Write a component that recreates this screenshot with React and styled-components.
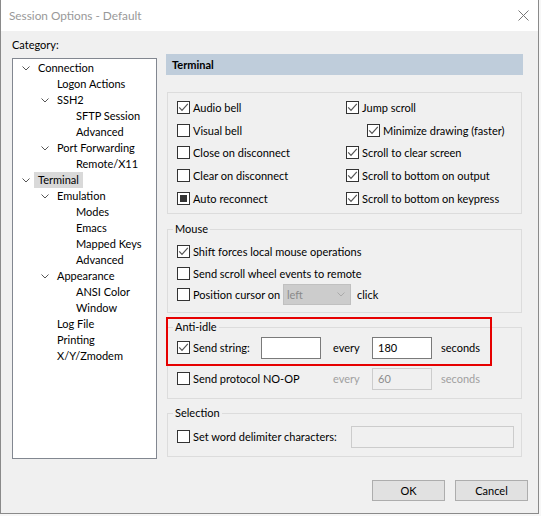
import React from 'react'
import styled, { createGlobalStyle } from 'styled-components'

const GlobalStyle = createGlobalStyle`
  html, body { margin: 0; padding: 0; background: #f7f7f7; }
  body {
    font-family: Lato, "Liberation Sans", sans-serif;
    font-size: 11px;
    color: #000;
  }
  * { box-sizing: border-box; }
`;

const Dialog = styled.div`
  width: 539px;
  height: 514px;
  background: #f0f0f0;
  border: 1px solid #8a8a8a;
  border-top: none;
  display: flex;
  flex-direction: column;
`;

const TitleBar = styled.div`
  height: 31px;
  flex-shrink: 0;
  background: #fff;
  display: flex;
  align-items: center;
  justify-content: space-between;
  padding: 0 9px 0 8px;
  color: #999;
  font-size: 11.8px;
`;

const Content = styled.div`
  display: grid;
  grid-template-columns: 145px 357px;
  column-gap: 9px;
  padding-left: 11px;
  height: 428px;
`;

const LeftCol = styled.div`
  padding-top: 7px;
  display: flex;
  flex-direction: column;
`;

const RightCol = styled.div`
  padding-top: 23px;
  display: flex;
  flex-direction: column;
`;

const CategoryLabel = styled.div`
  line-height: 14px;
  margin-bottom: 6px;
`;

const Tree = styled.div`
  height: 401px;
  background: #fff;
  border: 1px solid #828790;
  padding-top: 1px;
`;

const TreeRow = styled.div`
  height: 16px;
  display: flex;
  align-items: center;
  padding-left: ${p => 6 + p.$level * 19}px;
  white-space: nowrap;
`;

const Toggle = styled.span`
  width: 19px;
  height: 16px;
  flex-shrink: 0;
  display: flex;
  align-items: center;
  padding-left: 3px;
`;

const TreeLabel = styled.span`
  line-height: 16px;
  padding: 0 4px;
  margin-left: -4px;
  background: ${p => (p.$selected ? '#d9d9d9' : 'transparent')};
`;

const Header = styled.div`
  height: 21px;
  background: #bfcddb;
  display: flex;
  align-items: center;
  padding-left: 6px;
  font-weight: 700;
`;

const Group = styled.div`
  position: relative;
  margin: ${p => p.$top}px 1px 0 1px;
  border: 1px solid #dcdcdc;
  padding: ${p => p.$pad || '0 9px 0 9px'};
`;

const Legend = styled.div`
  width: fit-content;
  line-height: 14px;
  padding: 0 2px;
  margin: -8px 0 0 -4px;
  background: #f0f0f0;
`;

const CheckGrid = styled.div`
  display: grid;
  grid-template-columns: 169px 1fr;
  grid-template-rows: repeat(5, 22.75px);
  grid-auto-flow: column;
  align-items: center;
`;

const Rows = styled.div`
  margin-top: ${p => p.$top}px;
  display: grid;
  grid-auto-rows: ${p => p.$row}px;
  row-gap: ${p => p.$gap || 0}px;
  align-items: center;
`;

const Field = styled.div`
  display: grid;
  grid-template-columns: ${p => p.$cols};
  align-items: center;
  height: 100%;
`;

const CheckLabel = styled.label`
  display: flex;
  align-items: center;
  gap: 3px;
  margin-left: ${p => p.$indent || 0}px;
  white-space: nowrap;
`;

const Box = styled.span`
  width: 13px;
  height: 13px;
  flex-shrink: 0;
  border: 1px solid #333;
  background: #fff;
  display: flex;
  align-items: center;
  justify-content: center;
`;

const Mixed = styled.span`
  width: 7px;
  height: 7px;
  background: #333;
`;

const TextBox = styled.div`
  width: ${p => p.$w}px;
  height: 22px;
  border: 1px solid ${p => (p.$disabled ? '#cccccc' : '#7a7a7a')};
  background: ${p => (p.$disabled ? '#f0f0f0' : '#fff')};
  color: ${p => (p.$disabled ? '#8c8c8c' : '#000')};
  display: flex;
  align-items: center;
  padding-left: 5px;
`;

const Note = styled.span`
  padding-left: ${p => p.$pad || 0}px;
  color: ${p => (p.$disabled ? '#a0a0a0' : '#000')};
`;

const Select = styled.div`
  width: 68px;
  height: 21px;
  background: #cccccc;
  border: 1px solid #c0c0c0;
  color: #8a8a8a;
  display: flex;
  align-items: center;
  justify-content: space-between;
  padding: 0 5px 0 3px;
`;

const Highlight = styled.div`
  position: absolute;
  left: -2px;
  top: -11px;
  width: 326px;
  height: 49px;
  border: 2px solid #e60000;
  pointer-events: none;
`;

const Footer = styled.div`
  display: flex;
  justify-content: flex-end;
  gap: 10px;
  padding: 21px 10px 0 0;
`;

const Button = styled.button`
  width: 73px;
  height: 21px;
  background: #e1e1e1;
  border: 1px solid #adadad;
  font: inherit;
  color: #000;
  padding: 0;
`;

const Chevron = ({ color = '#555' }) => (
  <svg width="8" height="5" viewBox="0 0 8 5">
    <polyline points="0.5,0.5 4,4 7.5,0.5" fill="none" stroke={color} strokeWidth="1" />
  </svg>
);

const CloseIcon = () => (
  <svg width="11" height="11" viewBox="0 0 11 11">
    <path d="M0.5 0.5 L10.5 10.5 M10.5 0.5 L0.5 10.5" stroke="#777" strokeWidth="1" />
  </svg>
);

function Check({ checked, mixed, indent, children }) {
  return (
    <CheckLabel $indent={indent}>
      <Box>
        {checked && (
          <svg width="11" height="11" viewBox="0 0 11 11">
            <polyline points="1.2,5.4 4,8.4 9.8,1.8" fill="none" stroke="#555" strokeWidth="1.2" />
          </svg>
        )}
        {mixed && <Mixed />}
      </Box>
      {children}
    </CheckLabel>
  );
}

const tree = [
  { label: 'Connection', level: 0, open: true },
  { label: 'Logon Actions', level: 1 },
  { label: 'SSH2', level: 1, open: true },
  { label: 'SFTP Session', level: 2 },
  { label: 'Advanced', level: 2 },
  { label: 'Port Forwarding', level: 1, open: true },
  { label: 'Remote/X11', level: 2 },
  { label: 'Terminal', level: 0, open: true, selected: true },
  { label: 'Emulation', level: 1, open: true },
  { label: 'Modes', level: 2 },
  { label: 'Emacs', level: 2 },
  { label: 'Mapped Keys', level: 2 },
  { label: 'Advanced', level: 2 },
  { label: 'Appearance', level: 1, open: true },
  { label: 'ANSI Color', level: 2 },
  { label: 'Window', level: 2 },
  { label: 'Log File', level: 1 },
  { label: 'Printing', level: 1 },
  { label: 'X/Y/Zmodem', level: 1 },
];

export default function App() {
  return (
    <>
      <GlobalStyle />
      <Dialog>
        <TitleBar>
          <span>Session Options - Default</span>
          <CloseIcon />
        </TitleBar>
        <Content>
          <LeftCol>
            <CategoryLabel>Category:</CategoryLabel>
            <Tree>
              {tree.map((item, i) => (
                <TreeRow key={i} $level={item.level}>
                  <Toggle>{item.open && <Chevron />}</Toggle>
                  <TreeLabel $selected={item.selected}>{item.label}</TreeLabel>
                </TreeRow>
              ))}
            </Tree>
          </LeftCol>

          <RightCol>
            <Header>Terminal</Header>

            <Group $top={17} $pad="3px 9px 3px 9px">
              <CheckGrid>
                <Check checked>Audio bell</Check>
                <Check>Visual bell</Check>
                <Check>Close on disconnect</Check>
                <Check>Clear on disconnect</Check>
                <Check mixed>Auto reconnect</Check>
                <Check checked>Jump scroll</Check>
                <Check checked indent={21}>Minimize drawing (faster)</Check>
                <Check checked>Scroll to clear screen</Check>
                <Check checked>Scroll to bottom on output</Check>
                <Check checked>Scroll to bottom on keypress</Check>
              </CheckGrid>
            </Group>

            <Group $top={15} $pad="0 9px 6.5px 9px">
              <Legend>Mouse</Legend>
              <Rows $top={5} $row={21.5}>
                <Check checked>Shift forces local mouse operations</Check>
                <Check>Send scroll wheel events to remote</Check>
                <Field $cols="106px 68px auto">
                  <Check>Position cursor on</Check>
                  <Select>
                    <span>left</span>
                    <Chevron color="#aaa" />
                  </Select>
                  <Note $pad={6}>click</Note>
                </Field>
              </Rows>
            </Group>

            <Group $top={14} $pad="0 9px 8px 9px">
              <Legend>Anti-idle</Legend>
              <Rows $top={3} $row={22} $gap={9}>
                <Field $cols="84px 60px 51px 60px auto">
                  <Check checked>Send string:</Check>
                  <TextBox $w={60} />
                  <Note $pad={12}>every</Note>
                  <TextBox $w={60}>180</TextBox>
                  <Note $pad={9}>seconds</Note>
                </Field>
                <Field $cols="84px 60px 51px 60px auto">
                  <Check>Send protocol NO-OP</Check>
                  <span />
                  <Note $pad={12} $disabled>every</Note>
                  <TextBox $w={60} $disabled>60</TextBox>
                  <Note $pad={9} $disabled>seconds</Note>
                </Field>
              </Rows>
              <Highlight />
            </Group>

            <Group $top={14} $pad="0 9px 8px 9px">
              <Legend>Selection</Legend>
              <Rows $top={6} $row={22}>
                <Field $cols="174px 163px">
                  <Check>Set word delimiter characters:</Check>
                  <TextBox $w={163} $disabled />
                </Field>
              </Rows>
            </Group>
          </RightCol>
        </Content>

        <Footer>
          <Button>OK</Button>
          <Button>Cancel</Button>
        </Footer>
      </Dialog>
    </>
  )
}
